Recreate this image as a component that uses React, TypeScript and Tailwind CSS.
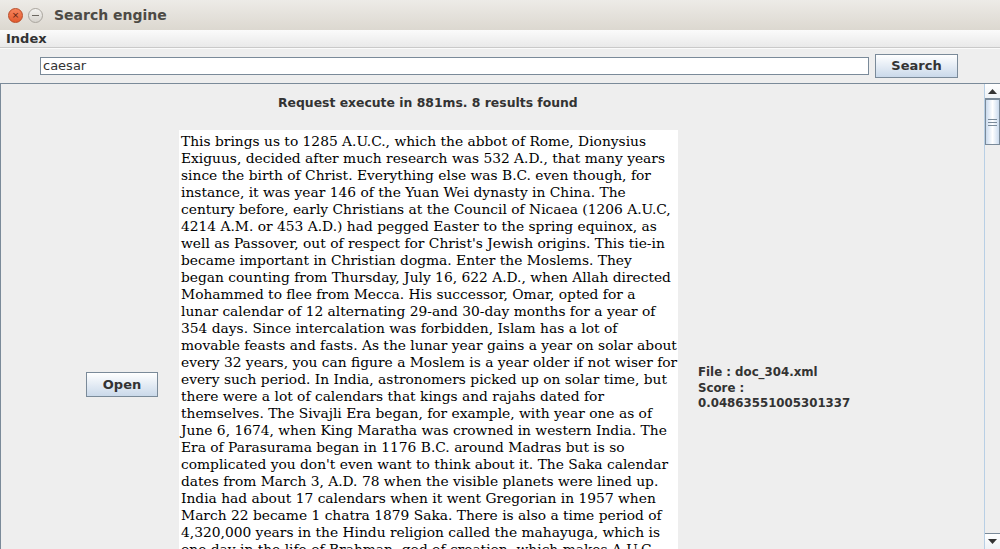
import React from "react";

const lines = [
  "This brings us to 1285 A.U.C., which the abbot of Rome, Dionysius",
  "Exiguus, decided after much research was 532 A.D., that many years",
  "since the birth of Christ. Everything else was B.C. even though, for",
  "instance, it was year 146 of the Yuan Wei dynasty in China. The",
  "century before, early Christians at the Council of Nicaea (1206 A.U.C,",
  "4214 A.M. or 453 A.D.) had pegged Easter to the spring equinox, as",
  "well as Passover, out of respect for Christ's Jewish origins. This tie-in",
  "became important in Christian dogma. Enter the Moslems. They",
  "began counting from Thursday, July 16, 622 A.D., when Allah directed",
  "Mohammed to flee from Mecca. His successor, Omar, opted for a",
  "lunar calendar of 12 alternating 29-and 30-day months for a year of",
  "354 days. Since intercalation was forbidden, Islam has a lot of",
  "movable feasts and fasts. As the lunar year gains a year on solar about",
  "every 32 years, you can figure a Moslem is a year older if not wiser for",
  "every such period. In India, astronomers picked up on solar time, but",
  "there were a lot of calendars that kings and rajahs dated for",
  "themselves. The Sivajli Era began, for example, with year one as of",
  "June 6, 1674, when King Maratha was crowned in western India. The",
  "Era of Parasurama began in 1176 B.C. around Madras but is so",
  "complicated you don't even want to think about it. The Saka calendar",
  "dates from March 3, A.D. 78 when the visible planets were lined up.",
  "India had about 17 calendars when it went Gregorian in 1957 when",
  "March 22 became 1 chatra 1879 Saka. There is also a time period of",
  "4,320,000 years in the Hindu religion called the mahayuga, which is",
  "one day in the life of Brahman, god of creation, which makes A.U.C.",
  "look like a very short stretch of time indeed. The Chinese, for their",
  "part, counted years in cycles of sixty, naming each year after one of",
  "twelve animals and one of five elements, so that a given year would",
  "come round again only once in a lifetime. The Japanese followed a",
  "similar scheme until the reign of the Emperor Meiji.",
];

const sans = { fontFamily: '"DejaVu Sans", sans-serif' };

const App = () => {
  return (
    <div className="w-[1000px] h-[549px] flex flex-col overflow-hidden bg-[#eeeeee]" style={sans}>
      {/* title bar */}
      <div className="h-[30px] flex items-center bg-gradient-to-b from-[#edebe7] to-[#dcd8d0] shrink-0">
        <div className="ml-[8px] w-[15px] h-[15px] rounded-full bg-gradient-to-b from-[#f7845c] to-[#e25a2e] border border-[#b94a25] flex items-center justify-center text-[9px] leading-none text-[#5a2010]">
          ×
        </div>
        <div className="ml-[5px] w-[15px] h-[15px] rounded-full bg-gradient-to-b from-[#f4f3f1] to-[#d6d3cd] border border-[#a9a59e] flex items-center justify-center">
          <div className="w-[7px] h-px bg-[#6b6862]" />
        </div>
        <span className="ml-[11px] text-[14px] font-bold text-[#4d4a45]">Search engine</span>
      </div>

      {/* menu bar */}
      <div className="h-[18px] flex items-center bg-gradient-to-b from-[#fbfbfb] to-[#e9e9e9] border-b border-[#c9c9c9] shrink-0">
        <span className="ml-[6px] text-[13px] font-bold text-[#333333]">Index</span>
      </div>

      {/* search row */}
      <div className="h-[35px] flex items-center shrink-0 border-t border-[#fafafa]">
        <input
          defaultValue="caesar"
          className="ml-[40px] w-[829px] h-[18px] bg-white border border-[#7a8a99] px-[2px] text-[13px] text-[#333333] focus:outline-none"
          style={sans}
        />
        <button className="ml-[6px] w-[83px] h-[24px] border border-[#7a8a99] bg-gradient-to-b from-[#ffffff] to-[#cad9ea] text-[13px] font-bold text-[#333333]">
          Search
        </button>
      </div>

      {/* scroll pane */}
      <div className="flex-1 flex border-t border-l border-[#7a8a99] min-h-0">
        <div className="flex-1 overflow-hidden">
          <div className="h-[46px] pt-[6px]">
            <span className="ml-[277px] text-[12.4px] font-bold text-[#333333]">
              Request execute in 881ms. 8 results found
            </span>
          </div>
          <div className="flex items-center">
            <div className="w-[178px] flex shrink-0">
              <button className="ml-[85px] mb-[4px] w-[72px] h-[25px] border border-[#7a8a99] bg-gradient-to-b from-[#ffffff] to-[#cad9ea] text-[13px] font-bold text-[#333333]">
                Open
              </button>
            </div>
            <div
              className="w-[499px] bg-white pl-[2px] pt-[3px] text-[13.8px] leading-[17px] text-black shrink-0"
              style={{ fontFamily: '"DejaVu Serif", serif' }}
            >
              {lines.map((l, i) => (
                <div key={i} className="whitespace-nowrap">
                  {l}
                </div>
              ))}
            </div>
            <div className="ml-[20px] mt-[4px] text-[11.8px] leading-[15.5px] font-bold text-[#333333]">
              <div>File : doc_304.xml</div>
              <div>Score :</div>
              <div>0.04863551005301337</div>
            </div>
          </div>
        </div>

        {/* scrollbar */}
        <div className="w-[16px] flex flex-col border-l border-[#b8cfe5] bg-[#eeeeee] shrink-0">
          <div className="h-[15px] bg-gradient-to-b from-[#ffffff] to-[#eef2f6] border-b border-[#7a8a99] flex items-center justify-center">
            <svg width="9" height="5" viewBox="0 0 9 5">
              <path d="M0 5 L4.5 0 L9 5 Z" fill="#333333" />
            </svg>
          </div>
          <div className="h-[46px] border border-[#7a8a99] bg-gradient-to-r from-[#cbdbee] via-[#ffffff] to-[#cbdbee] flex flex-col items-center justify-center gap-[2px]">
            <div className="w-[9px] h-px bg-[#7a8a99]" />
            <div className="w-[9px] h-px bg-[#7a8a99]" />
            <div className="w-[9px] h-px bg-[#7a8a99]" />
          </div>
          <div className="flex-1" />
          <div className="h-[16px] bg-gradient-to-b from-[#ffffff] to-[#eef2f6] border-t border-[#7a8a99] flex items-center justify-center">
            <svg width="9" height="5" viewBox="0 0 9 5">
              <path d="M0 0 L9 0 L4.5 5 Z" fill="#333333" />
            </svg>
          </div>
        </div>
      </div>
    </div>
  );
};

export default App;
